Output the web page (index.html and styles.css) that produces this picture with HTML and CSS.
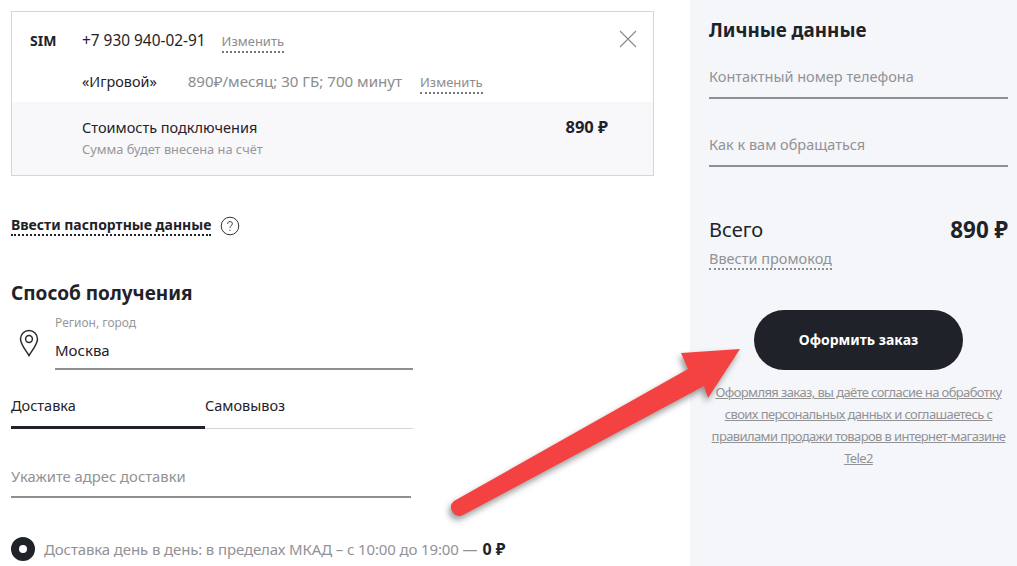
FILE: index.html
```html
<!DOCTYPE html>
<html>
<head>
	<meta charset="utf-8">
	<link rel="stylesheet" href="styles.css">
	<title>Оформление заказа</title>
</head>
<body>
<div class="page">
	<div class="main">
		<div class="card">
			<div class="card-top">
				<div class="card-row">
					<span class="sim">SIM</span>
					<span class="phone">+7 930 940-02-91</span>
					<a class="change">Изменить</a>
					<svg class="close" width="18" height="18" viewBox="0 0 18 18"><path d="M1 1L17 17M17 1L1 17" stroke="#8a8a8a" stroke-width="1.1" fill="none"/></svg>
				</div>
				<div class="card-row tariff-row">
					<span class="tariff">«Игровой»</span>
					<span class="tariff-info">890₽/месяц; 30 ГБ; 700 минут</span>
					<a class="change">Изменить</a>
				</div>
			</div>
			<div class="card-cost">
				<div>
					<div class="cost-title">Стоимость подключения</div>
					<div class="cost-note">Сумма будет внесена на счёт</div>
				</div>
				<div class="cost-price">890 ₽</div>
			</div>
		</div>

		<div class="passport">
			<a class="passport-link">Ввести паспортные данные</a>
			<svg width="20" height="20" viewBox="0 0 20 20"><circle cx="10" cy="10" r="8.8" stroke="#333" stroke-width="1" fill="none"/><path d="M7.6 7.8C7.7 6.3 8.8 5.6 10 5.6c1.4 0 2.4.9 2.4 2.1 0 1.900-2.400 1.900-2.400 4.100" stroke="#333" stroke-width="1" fill="none"/><circle cx="10" cy="14.100" r=".7" fill="#333"/></svg>
		</div>

		<h2 class="section-title">Способ получения</h2>

		<div class="region">
			<svg class="pin" width="20" height="28" viewBox="0 0 20 28"><path d="M10 26.500C7 21.500 1.500 15.500 1.500 10a8.500 8.500 0 0 1 17 0c0 5.500-5.500 11.500-8.500 16.500z" stroke="#2a2a2a" stroke-width="1.500" fill="none"/><circle cx="10" cy="10" r="3.400" stroke="#2a2a2a" stroke-width="1.500" fill="none"/></svg>
			<div class="region-field">
				<div class="region-label">Регион, город</div>
				<div class="region-value">Москва</div>
			</div>
		</div>

		<div class="tabs">
			<div class="tab active">Доставка</div>
			<div class="tab">Самовывоз</div>
		</div>

		<div class="address">Укажите адрес доставки</div>

		<div class="delivery">
			<span class="radio"></span>
			<span class="delivery-text">Доставка день в день: в пределах МКАД – с 10:00 до 19:00 —</span>
			<b class="delivery-price">0 ₽</b>
		</div>
	</div>

	<div class="side">
		<h2 class="side-title">Личные данные</h2>
		<div class="field first">Контактный номер телефона</div>
		<div class="field second">Как к вам обращаться</div>
		<div class="total">
			<span>Всего</span>
			<b class="total-price">890 ₽</b>
		</div>
		<a class="promo">Ввести промокод</a>
		<div class="order-btn">Оформить заказ</div>
		<p class="legal"><u>Оформляя заказ, вы даёте согласие на обработку</u><br><u>своих персональных данных и соглашаетесь с</u><br><u>правилами продажи товаров в интернет-магазине</u><br><u>Tele2</u></p>
	</div>

	<svg class="arrow" width="1017" height="566" viewBox="0 0 1017 566"><path d="M740 349L681 353L688 369L454 501Q449 505 452 511Q456 518 463 515L704 386L708 398Z" fill="#f44141"/></svg>
</div>
</body>
</html>
```

FILE: styles.css
```css
html, body {
	margin: 0;
	padding: 0;
}

body {
	font-family: "Noto Sans", "Open Sans", sans-serif;
	color: #1f2229;
	background: #fff;
}

.page {
	position: relative;
	display: flex;
	width: 1017px;
	height: 566px;
	overflow: hidden;
}

.main {
	width: 690px;
	box-sizing: border-box;
	padding: 11px 36px 0 11px;
}

.card {
	border: 1px solid #d6d6d8;
	height: 165px;
	box-sizing: border-box;
	display: flex;
	flex-direction: column;
}

.card-top {
	height: 90px;
	padding: 19px 0 0 18px;
	box-sizing: border-box;
}

.card-row {
	display: flex;
	align-items: baseline;
	position: relative;
}

.tariff-row {
	margin-top: 18px;
}

.sim {
	width: 52px;
	font-size: 14px;
	font-weight: 700;
	line-height: 20px;
}

.phone {
	font-size: 15.400px;
	line-height: 20px;
	margin-right: 16px;
}

.tariff {
	margin-left: 52px;
	font-size: 14.400px;
	line-height: 20px;
	margin-right: 31px;
}

.tariff-info {
	font-size: 15.100px;
	line-height: 20px;
	color: #8c8c8e;
	margin-right: 18px;
}

.change {
	font-size: 13px;
	line-height: 19px;
	color: #8c8c8e;
	border-bottom: 2px dotted #777;
}

.close {
	position: absolute;
	right: 16px;
	top: -1px;
}

.card-cost {
	flex: 1;
	background: #f8f8fa;
	display: flex;
	justify-content: space-between;
	padding: 15px 45px 0 70px;
}

.cost-title {
	font-size: 14.500px;
	line-height: 20px;
}

.cost-note {
	margin-top: 2px;
	font-size: 12.800px;
	line-height: 20px;
	color: #97979a;
}

.cost-price {
	font-size: 16.500px;
	font-weight: 700;
	line-height: 20px;
}

.passport {
	display: flex;
	align-items: center;
	gap: 9px;
	margin-top: 40px;
	height: 20px;
}

.passport-link {
	font-size: 14px;
	font-weight: 700;
	line-height: 18px;
	border-bottom: 2px dotted #1f2229;
}

.section-title {
	margin: 44px 0 0;
	font-size: 19px;
	line-height: 26px;
	font-weight: 700;
}

.region {
	display: flex;
	margin-top: 9px;
}

.pin {
	margin: 14px 16px 0 8px;
}

.region-field {
	width: 358px;
	height: 53px;
	border-bottom: 2px solid #8f8f91;
}

.region-label {
	font-size: 12px;
	line-height: 16px;
	color: #97979a;
}

.region-value {
	font-size: 15px;
	line-height: 20px;
	margin-top: 9px;
}

.tabs {
	display: flex;
	width: 402px;
	height: 59px;
	box-sizing: border-box;
	border-bottom: 1px solid #d6d6d8;
}

.tab {
	width: 194px;
	padding-top: 25px;
	font-size: 14.500px;
	line-height: 20px;
}

.tab.active {
	height: 59px;
	box-sizing: border-box;
	border-bottom: 3px solid #1f2229;
}

.address {
	width: 400px;
	height: 69px;
	box-sizing: border-box;
	padding-top: 37px;
	font-size: 14.800px;
	line-height: 20px;
	color: #929295;
	border-bottom: 2px solid #8f8f91;
}

.delivery {
	display: flex;
	align-items: center;
	margin-top: 39px;
	height: 24px;
}

.radio {
	width: 8px;
	height: 8px;
	border: 8px solid #1f2229;
	border-radius: 50%;
	background: #fff;
	margin-right: 9px;
}

.delivery-text {
	font-size: 15px;
	letter-spacing: -0.120px;
	color: #929295;
	white-space: nowrap;
}

.delivery-price {
	margin-left: 5px;
	font-size: 16px;
	font-weight: 700;
	white-space: nowrap;
}

.side {
	width: 327px;
	box-sizing: border-box;
	background: #f4f6fa;
	padding: 17px 9px 0 19px;
	display: flex;
	flex-direction: column;
}

.side-title {
	margin: 0;
	font-size: 18.800px;
	line-height: 26px;
	font-weight: 700;
}

.field {
	font-size: 14.500px;
	line-height: 20px;
	color: #929295;
	border-bottom: 2px solid #8f9095;
	height: 31px;
}

.field.first {
	margin-top: 9px;
	padding-top: 14px;
}

.field.second {
	margin-top: 26px;
	padding-top: 9px;
}

.total {
	display: flex;
	justify-content: space-between;
	align-items: center;
	margin-top: 50px;
	font-size: 20px;
	line-height: 26px;
}

.total-price {
	font-size: 22.400px;
}

.promo {
	align-self: flex-start;
	margin-top: 5px;
	font-size: 14.500px;
	line-height: 20px;
	color: #929295;
	border-bottom: 2px dotted #8f8f91;
}

.order-btn {
	align-self: center;
	margin-top: 40px;
	width: 209px;
	height: 60px;
	border-radius: 30px;
	background: #1f2229;
	color: #fff;
	font-size: 14px;
	font-weight: 700;
	line-height: 60px;
	text-align: center;
}

.legal {
	margin: 11px 0 0;
	font-size: 13px;
	line-height: 22px;
	letter-spacing: -0.610px;
	text-align: center;
	color: #929295;
	white-space: nowrap;
}

.arrow {
	position: absolute;
	left: 0;
	top: 0;
	filter: drop-shadow(-2px 4px 3px rgba(0, 0, 0, 0.4));
}
```
